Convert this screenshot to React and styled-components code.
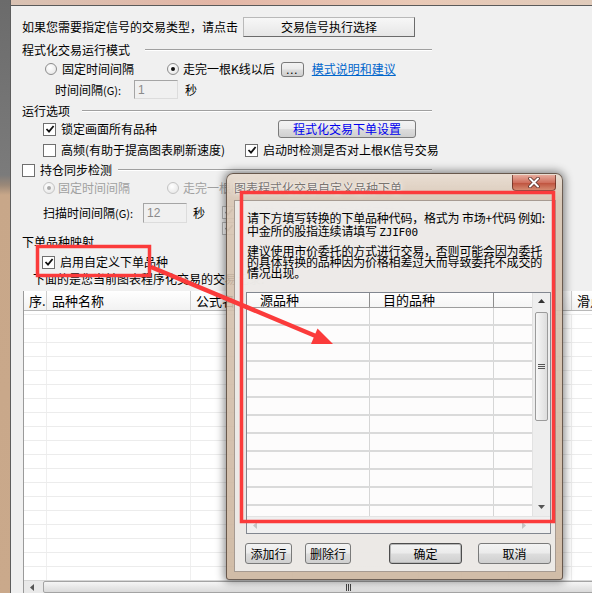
import React from 'react'
import styled, { createGlobalStyle } from 'styled-components'

const GlobalStyle = createGlobalStyle`
  html, body { margin: 0; padding: 0; }
  body {
    background: #f0f0f0;
    font-family: "Noto Sans CJK SC", "Noto Sans", sans-serif;
    font-size: 12px;
    line-height: 14px;
    color: #000;
  }
`

const Screen = styled.div`
  position: relative;
  width: 592px;
  height: 593px;
  overflow: hidden;
  display: flex;
  background: #f0f0f0;
`

const BackStrip = styled.div`
  flex: none;
  width: 10px;
  background: linear-gradient(to bottom, #6b6b6b 0, #7b7b7b 175px, #9a8878 185px, #c8a789 195px, #caa98b 100%);
  border-right: 1px solid #5e5e5e;
`

const Window = styled.div`
  flex: 1;
  display: flex;
  flex-direction: column;
  min-width: 0;
`

const TopBlur = styled.div`
  flex: none;
  height: 5px;
  background: linear-gradient(to right, #d9c2b3, #e3b6a6 35%, #e9c9b6 70%, #e0cbbb);
  border-bottom: 1px solid #5a5a5a;
`

const Panel = styled.div`
  flex: 1;
  display: flex;
  flex-direction: column;
  padding-left: 11px;
  min-height: 0;
  background: #f0f0f0;
`

const Row = styled.div`
  flex: none;
  display: flex;
  align-items: center;
  height: ${p => p.$h}px;
  margin-top: ${p => p.$mt}px;
  padding-left: ${p => p.$pl || 0}px;
  white-space: nowrap;
`

const GroupHead = styled(Row)`
  width: 410px;
`

const Rule = styled.div`
  flex: 1;
  margin-left: ${p => p.$ml}px;
  border-top: 1px solid #a0a0a0;
  border-bottom: 1px solid #ffffff;
`

const Label = styled.span`
  display: inline-block;
  width: ${p => (p.$w ? `${p.$w}px` : 'auto')};
  margin-left: ${p => p.$ml || 0}px;
  color: ${p => (p.$dim ? '#a0a0a0' : '#000')};
`

const Small = styled.span`
  font-size: 11px;
`

const ClassicButton = styled.div`
  width: ${p => p.$w}px;
  height: 20px;
  margin-left: ${p => p.$ml || 0}px;
  box-sizing: border-box;
  display: flex;
  align-items: center;
  justify-content: center;
  background: linear-gradient(#f7f7f7, #e6e6e6);
  border: 1px solid #b9b9b9;
  border-right-color: #6b6b6b;
  border-bottom-color: #6b6b6b;
`

const RoundButton = styled.div`
  width: ${p => p.$w}px;
  height: ${p => p.$h}px;
  margin-left: ${p => p.$ml || 0}px;
  box-sizing: border-box;
  display: flex;
  align-items: center;
  justify-content: center;
  border: 1px solid ${p => (p.$default ? '#4d4d4d' : '#7a7a7a')};
  box-shadow: ${p => (p.$default ? 'inset 0 0 0 1px #b8b8b8' : 'none')};
  border-radius: 3px;
  color: ${p => p.$color || '#000'};
  background: linear-gradient(#f3f3f3 0%, #ebebeb 48%, #dddddd 52%, #cfcfcf 100%);
  font-size: ${p => p.$fs || 12}px;
  letter-spacing: ${p => p.$ls || 0}px;
`

const Link = styled.span`
  margin-left: 8px;
  color: #0066cc;
  text-decoration: underline;
`

const Field = styled.div`
  width: ${p => p.$w}px;
  height: ${p => p.$h}px;
  box-sizing: border-box;
  border: 1px solid #a5a5a5;
  border-right-color: #dcdcdc;
  border-bottom-color: #dcdcdc;
  background: #f0f0f0;
  color: #8a8a8a;
  padding-left: 3px;
  display: flex;
  align-items: center;
  font-family: "Liberation Sans", Arial, sans-serif;
  font-size: 12px;
`

const Option = styled.div`
  display: flex;
  align-items: center;
  gap: ${p => p.$gap || 5}px;
  width: ${p => (p.$w ? `${p.$w}px` : 'auto')};
  color: ${p => (p.$dim ? '#a0a0a0' : '#000')};
`

const RadioDot = styled.span`
  flex: none;
  width: 12px;
  height: 12px;
  box-sizing: border-box;
  border-radius: 50%;
  border: 1px solid ${p => (p.$dim ? '#c4c4c4' : '#8c8c8c')};
  background: radial-gradient(circle at 40% 35%, #ffffff, #e2e2e2);
  display: flex;
  align-items: center;
  justify-content: center;
  &::after {
    content: '';
    width: 4px;
    height: 4px;
    border-radius: 50%;
    background: ${p => (p.$on ? (p.$dim ? '#a8a8a8' : '#111') : 'transparent')};
  }
`

const Box = styled.span`
  flex: none;
  width: 13px;
  height: 13px;
  box-sizing: border-box;
  border: 1px solid ${p => (p.$dim ? '#b8b8b8' : '#6f6f6f')};
  background: #fff;
  display: flex;
  align-items: center;
  justify-content: center;
`

const SideChecks = styled.div`
  align-self: flex-start;
  margin-top: 1px;
  margin-left: 17px;
  display: flex;
  flex-direction: column;
`

const CheckLine = styled.div`
  height: 16px;
  display: flex;
  align-items: center;
`

const Check = ({ on, dim, w, gap, children }) => (
  <Option $w={w} $gap={gap} $dim={dim}>
    <Box $dim={dim}>
      {on && (
        <svg width="10" height="10" viewBox="0 0 10 10">
          <path d="M1.5 5 L4 7.6 L8.6 2" fill="none" stroke={dim ? '#9a9a9a' : '#111'} strokeWidth="1.8" />
        </svg>
      )}
    </Box>
    <span>{children}</span>
  </Option>
)

const Radio = ({ on, dim, w, gap, children }) => (
  <Option $w={w} $gap={gap} $dim={dim}>
    <RadioDot $on={on} $dim={dim} />
    <span>{children}</span>
  </Option>
)

/* ---------- main record table ---------- */

const COLS = '23px 144px 102px 126px 43px 47px 63px 80px'

const Table = styled.div`
  flex: 1;
  min-height: 0;
  margin-top: 4px;
  margin-left: 1px;
  display: flex;
  flex-direction: column;
  border-left: 1px solid #9a9a9a;
  background: #fff;
`

const HeadRow = styled.div`
  flex: none;
  height: 20px;
  display: grid;
  grid-template-columns: ${COLS};
  background: linear-gradient(#ffffff, #f2f2f2);
  border-bottom: 1px solid #b8b8b8;
  box-sizing: border-box;
`

const HeadCell = styled.div`
  display: flex;
  align-items: center;
  padding-left: 5px;
  border-right: 1px solid #cfcfcf;
  white-space: nowrap;
  overflow: hidden;
  font-size: 13px;
`

const Body = styled.div`
  flex: 1;
  min-height: 0;
  overflow: hidden;
  padding-top: 3px;
`

const BodyRow = styled.div`
  height: 13px;
  display: grid;
  grid-template-columns: ${COLS};
  border-top: 1px solid #ececec;
`

const BodyCell = styled.div`
  border-right: 1px solid #efefef;
`

const HScroll = styled.div`
  flex: none;
  height: 12px;
  display: flex;
  align-items: stretch;
  background: #e9e9e9;
  border-top: 1px solid #d6d6d6;
`

const ArrowBtn = styled.div`
  flex: none;
  width: ${p => p.$w}px;
  display: flex;
  align-items: center;
  justify-content: center;
`

const Thumb = styled.div`
  flex: none;
  width: 610px;
  margin-left: 2px;
  box-sizing: border-box;
  border: 1px solid #a3a3a3;
  border-radius: 2px;
  background: linear-gradient(#f5f5f5, #dadada);
  display: flex;
  align-items: center;
  justify-content: center;
`

const Grip = ({ vertical }) => (
  <svg width={7} height={7} viewBox="0 0 7 7">
    {vertical
      ? [1, 3, 5].map(y => <line key={y} x1="0" y1={y + 0.5} x2="7" y2={y + 0.5} stroke="#555" />)
      : [1, 3, 5].map(x => <line key={x} x1={x + 0.5} y1="0" x2={x + 0.5} y2="7" stroke="#444" />)}
  </svg>
)

const Tri = ({ dir, color = '#333' }) => {
  const pts = {
    up: '0,5 7,5 3.5,1',
    down: '0,1 7,1 3.5,5',
    left: '5,0 5,7 1,3.5',
    right: '1,0 1,7 5,3.5',
  }[dir]
  return (
    <svg width="7" height="7" viewBox="0 0 7 7">
      <polygon points={pts} fill={color} />
    </svg>
  )
}

/* ---------- dialog ---------- */

const Dialog = styled.div`
  position: absolute;
  left: 226px;
  top: 173px;
  width: 337px;
  height: 407px;
  box-sizing: border-box;
  display: flex;
  flex-direction: column;
  padding: 0 6px 7px 7px;
  border: 1px solid rgba(70, 55, 45, 0.75);
  border-radius: 7px 7px 3px 3px;
  background: linear-gradient(to bottom, rgba(232, 220, 208, 0.93) 0, rgba(214, 196, 178, 0.9) 26px, rgba(204, 181, 158, 0.9) 100%);
  box-shadow: 0 0 9px 2px rgba(0, 0, 0, 0.45);
`

const TitleBar = styled.div`
  flex: none;
  height: 26px;
  display: flex;
  align-items: center;
  justify-content: space-between;
`

const Title = styled.span`
  margin-top: 2px;
  color: rgba(40, 35, 30, 0.62);
  text-shadow: 0 0 6px rgba(255, 255, 255, 0.95), 0 0 2px rgba(255, 255, 255, 0.9);
  white-space: nowrap;
`

const CloseBtn = styled.div`
  align-self: flex-start;
  margin-top: 1px;
  width: 44px;
  height: 16px;
  box-sizing: border-box;
  border: 1px solid rgba(90, 40, 30, 0.7);
  border-top: none;
  border-radius: 0 0 4px 4px;
  background: linear-gradient(#e7ab9c, #d0705e 50%, #c05540 55%, #d58a70);
  display: flex;
  align-items: center;
  justify-content: center;
`

const Client = styled.div`
  flex: 1;
  display: flex;
  flex-direction: column;
  padding-left: 11px;
  border: 1px solid rgba(110, 90, 75, 0.55);
  background: rgba(240, 240, 240, 0.86);
  min-height: 0;
`

const Para = styled.div`
  margin-top: ${p => p.$mt}px;
  padding-left: 1px;
  line-height: ${p => p.$lh}px;
  letter-spacing: -0.2px;
  white-space: nowrap;
`

const Mono = styled.span`
  font-family: "DejaVu Sans Mono", "Liberation Mono", monospace;
  font-size: 11px;
`

const DTable = styled.div`
  flex: none;
  margin-top: 14px;
  width: 305px;
  height: 242px;
  box-sizing: border-box;
  border: 1px solid #828790;
  background: rgba(255, 255, 255, 0.86);
  display: flex;
  flex-direction: column;
`

const DTop = styled.div`
  flex: 1;
  display: flex;
  min-height: 0;
`

const DGrid = styled.div`
  flex: 1;
  overflow: hidden;
`

const DCOLS = '123px 124px 39px'

const DHead = styled.div`
  height: 15px;
  display: grid;
  grid-template-columns: ${DCOLS};
  background: linear-gradient(rgba(255, 255, 255, 0.6), rgba(240, 240, 240, 0.6));
  border-bottom: 1px solid #9d9d9d;
  box-sizing: border-box;
`

const DHeadCell = styled.div`
  display: flex;
  align-items: center;
  padding-left: ${p => p.$pl}px;
  border-right: 1px solid #8e8e8e;
  font-size: 13px;
  white-space: nowrap;
`

const DRow = styled.div`
  height: 18px;
  box-sizing: border-box;
  display: grid;
  grid-template-columns: ${DCOLS};
  border-bottom: 2px solid #dadada;
`

const DCell = styled.div`
  border-right: 1px solid #d6d6d6;
`

const VScroll = styled.div`
  flex: none;
  width: 17px;
  display: flex;
  flex-direction: column;
  align-items: center;
  background: #eeeeee;
  border-left: 1px solid #e2e2e2;
`

const VBtn = styled.div`
  flex: none;
  height: ${p => p.$h}px;
  width: 100%;
  display: flex;
  align-items: center;
  justify-content: center;
`

const VThumb = styled.div`
  flex: none;
  width: 13px;
  height: 109px;
  margin-top: 2px;
  box-sizing: border-box;
  border: 1px solid #9b9b9b;
  border-radius: 2px;
  background: linear-gradient(to right, #f7f7f7, #dddddd);
  display: flex;
  align-items: center;
  justify-content: center;
`

const Spacer = styled.div`
  flex: 1;
`

const DHScroll = styled.div`
  flex: none;
  height: 16px;
  display: flex;
  background: #f0f0f0;
  border-top: 1px solid #e4e4e4;
`

const ButtonBar = styled.div`
  flex: none;
  display: flex;
  align-items: center;
  margin-top: 9px;
  margin-left: -1px;
`

const Overlay = styled.svg`
  position: absolute;
  left: 0;
  top: 0;
  pointer-events: none;
`

const mainRows = Array.from({ length: 21 })
const dRows = Array.from({ length: 12 })
const headers = ['序.', '品种名称', '公式名', '下单时间', '类型', '交易量', '价格', '滑点']

export default function App() {
  return (
    <>
      <GlobalStyle />
      <Screen>
        <BackStrip />
        <Window>
          <TopBlur />
          <Panel>
            <Row $h={20} $mt={11}>
              <span>如果您需要指定信号的交易类型，请点击</span>
              <ClassicButton $w={172} $ml={5}>交易信号执行选择</ClassicButton>
            </Row>

            <GroupHead $h={14} $mt={6}>
              <span>程式化交易运行模式</span>
              <Rule $ml={15} />
            </GroupHead>

            <Row $h={16} $mt={4} $pl={23}>
              <Radio w={122}>固定时间间隔</Radio>
              <Radio on gap={4}>走完一根K线以后</Radio>
              <RoundButton $w={23} $h={15} $ml={6} $fs={11} $ls={1}>...</RoundButton>
              <Link>模式说明和建议</Link>
            </Row>

            <Row $h={19} $mt={3} $pl={33}>
              <Label $w={79}>时间间隔<Small>(G):</Small></Label>
              <Field $w={44} $h={19}>1</Field>
              <Label $ml={7}>秒</Label>
            </Row>

            <GroupHead $h={14} $mt={5}>
              <span>运行选项</span>
              <Rule $ml={12} />
            </GroupHead>

            <Row $h={18} $mt={2} $pl={21}>
              <Check on w={235}>锁定画面所有品种</Check>
              <RoundButton $w={138} $h={18} $color="#0000ee">程式化交易下单设置</RoundButton>
            </Row>

            <Row $h={16} $mt={4} $pl={21}>
              <Check w={202}>高频(有助于提高图表刷新速度)</Check>
              <Check on>启动时检测是否对上根K信号交易</Check>
            </Row>

            <GroupHead $h={16} $mt={4}>
              <Check gap={5}>持仓同步检测</Check>
              <Rule $ml={6} />
            </GroupHead>

            <Row $h={16} $mt={2} $pl={21}>
              <Radio on dim gap={3} w={124}>固定时间间隔</Radio>
              <Radio dim gap={4}>走完一根K线以后</Radio>
            </Row>

            <Row $h={20} $mt={7} $pl={21}>
              <Label $w={100}>扫描时间间隔<Small>(G):</Small></Label>
              <Field $w={44} $h={20}>12</Field>
              <Label $ml={6}>秒</Label>
              <SideChecks>
                <CheckLine><Check on dim>出现持仓不同步后自动矫正持仓</Check></CheckLine>
                <CheckLine><Check on dim>出现持仓不同步时弹出提示框</Check></CheckLine>
              </SideChecks>
            </Row>

            <Row $h={14} $mt={12}>
              <span>下单品种映射</span>
            </Row>

            <Row $h={16} $mt={5} $pl={20}>
              <Check on gap={5}>启用自定义下单品种</Check>
            </Row>

            <Row $h={16} $mt={1} $pl={11}>
              <span>下面的是您当前图表程序化交易的交易记录:</span>
            </Row>

            <Table>
              <HeadRow>
                {headers.map(h => (
                  <HeadCell key={h}>{h}</HeadCell>
                ))}
              </HeadRow>
              <Body>
                {mainRows.map((_, i) => (
                  <BodyRow key={i}>
                    {headers.map(h => (
                      <BodyCell key={h} />
                    ))}
                  </BodyRow>
                ))}
              </Body>
              <HScroll>
                <ArrowBtn $w={17}><Tri dir="left" color="#555" /></ArrowBtn>
                <Thumb><Grip /></Thumb>
              </HScroll>
            </Table>
          </Panel>
        </Window>

        <Dialog>
          <TitleBar>
            <Title>图表程式化交易自定义品种下单</Title>
            <CloseBtn>
              <svg width="14" height="11" viewBox="0 0 14 11">
                <path d="M3 1.5 L11 9.5 M11 1.5 L3 9.5" stroke="#5a3028" strokeWidth="3.6" strokeLinecap="round" />
                <path d="M3 1.5 L11 9.5 M11 1.5 L3 9.5" stroke="#ffffff" strokeWidth="2" strokeLinecap="round" />
              </svg>
            </CloseBtn>
          </TitleBar>
          <Client>
            <Para $mt={10} $lh={13}>
              请下方填写转换的下单品种代码，格式为 市场+代码 例如:
              <br />
              中金所的股指连续请填写 <Mono>ZJIF00</Mono>
            </Para>
            <Para $mt={6} $lh={11}>
              建议使用市价委托的方式进行交易，否则可能会因为委托
              <br />
              的具体转换的品种因为价格相差过大而导致委托不成交的
              <br />
              情况出现。
            </Para>

            <DTable>
              <DTop>
                <DGrid>
                  <DHead>
                    <DHeadCell $pl={13}>源品种</DHeadCell>
                    <DHeadCell $pl={13}>目的品种</DHeadCell>
                    <DHeadCell $pl={0} />
                  </DHead>
                  {dRows.map((_, i) => (
                    <DRow key={i}>
                      <DCell />
                      <DCell />
                      <DCell />
                    </DRow>
                  ))}
                </DGrid>
                <VScroll>
                  <VBtn $h={17}><Tri dir="up" /></VBtn>
                  <VThumb><Grip vertical /></VThumb>
                  <Spacer />
                  <VBtn $h={17}><Tri dir="down" color="#555" /></VBtn>
                </VScroll>
              </DTop>
              <DHScroll>
                <ArrowBtn $w={17}><Tri dir="left" color="#c4c4c4" /></ArrowBtn>
                <Spacer />
                <ArrowBtn $w={17}><Tri dir="right" color="#c4c4c4" /></ArrowBtn>
                <ArrowBtn $w={17} />
              </DHScroll>
            </DTable>

            <ButtonBar>
              <RoundButton $w={47} $h={21}>添加行</RoundButton>
              <RoundButton $w={46} $h={21} $ml={13}>删除行</RoundButton>
              <RoundButton $w={73} $h={21} $ml={38} $default>确定</RoundButton>
              <RoundButton $w={73} $h={21} $ml={16}>取消</RoundButton>
            </ButtonBar>
          </Client>
        </Dialog>

        <Overlay width="592" height="593" viewBox="0 0 592 593">
          <g fill="none" stroke="#fb3b3b" strokeWidth="3.5">
            <rect x="37.5" y="246.5" width="112" height="29" />
            <rect x="241.5" y="192.5" width="312" height="329" />
          </g>
          <line x1="151" y1="267" x2="318" y2="337" stroke="#fb3b3b" strokeWidth="4.5" />
          <polygon points="333,344 317.5,328.5 311,344" fill="#fb3b3b" />
        </Overlay>
      </Screen>
    </>
  )
}
